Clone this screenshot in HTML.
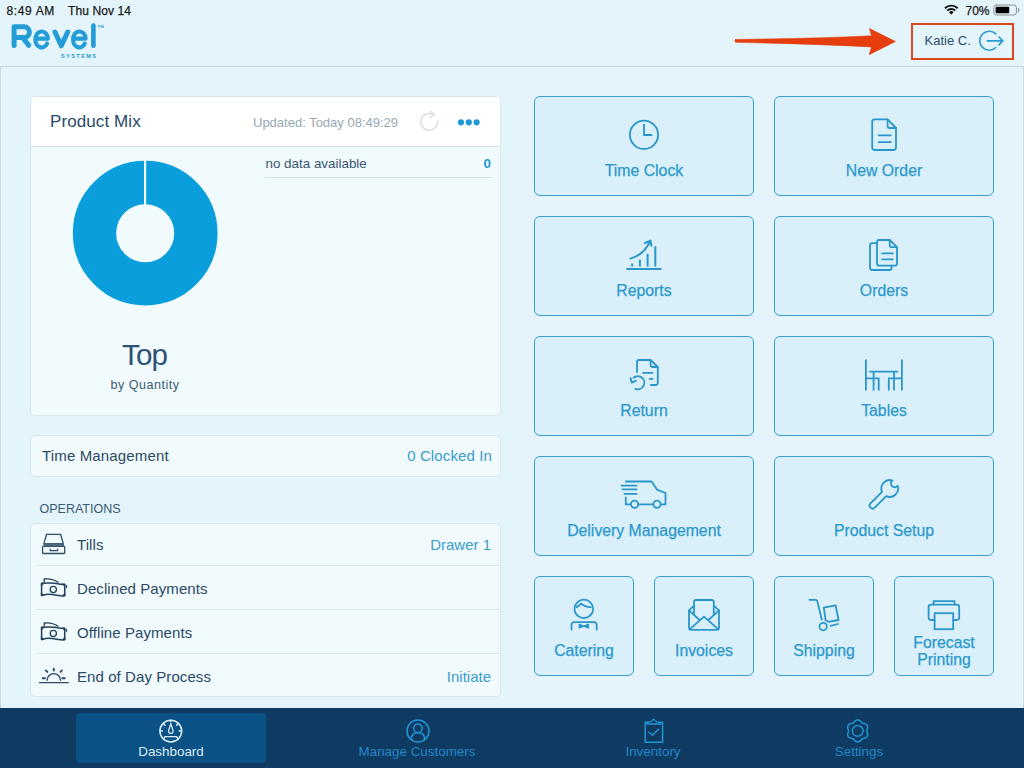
<!DOCTYPE html>
<html><head><meta charset="utf-8">
<style>
*{margin:0;padding:0;box-sizing:border-box}
html,body{width:1024px;height:768px;overflow:hidden}
body{position:relative;background:#e3f4fb;font-family:"Liberation Sans",sans-serif;color:#1f3f5c}
.a{position:absolute;white-space:nowrap}
.status{font-size:12px;color:#1a1a1a;top:3px;-webkit-text-stroke:0.25px #1a1a1a}
.card{background:#f1fafd;border:1px solid #dbe7ed;border-radius:5px}
.btn{position:absolute;background:#d9f0fb;border:1.8px solid #3a9fce;border-radius:6px}
.bl{position:absolute;left:-10px;right:-10px;text-align:center;color:#2a98cc;font-size:15.8px;-webkit-text-stroke:0.25px #2a98cc;line-height:17px;letter-spacing:0px}
.rt{position:absolute;left:77px;font-size:15px;color:#2b4964;letter-spacing:0.08px}
.rv{position:absolute;font-size:15px;color:#3a9dca;text-align:right;width:150px;left:341px;margin-top:-0.5px}
.div{position:absolute;left:36px;width:464px;height:1px;background:#dbe6ec}
.tl{position:absolute;top:744px;width:220px;text-align:center;font-size:13.4px;color:#2188c8;line-height:16px}
svg{position:absolute;left:0;top:0}
</style></head>
<body>
<!-- status bar -->
<div class="a status" style="left:6.6px;top:3.5px;letter-spacing:0.55px;word-spacing:0.3px">8:49 AM</div>
<div class="a status" style="left:68px;top:3.5px;letter-spacing:0.1px">Thu Nov 14</div>
<div class="a status" style="left:965.5px;top:3.5px">70%</div>

<!-- header line & left line -->
<div class="a" style="left:0;top:66px;width:1024px;height:1px;background:#c6d8e1"></div>
<div class="a" style="left:0;top:66px;width:1px;height:642px;background:#c6d8e1"></div>
<div class="a" style="left:1023px;top:66px;width:1px;height:642px;background:#c6d8e1"></div>

<!-- Revel logo -->
<div class="a" style="left:61px;top:52.5px;font-size:5.5px;font-weight:bold;color:#239cd8;letter-spacing:1.45px">SYSTEMS</div>
<svg width="120" height="60" viewBox="0 0 120 60" fill="none" stroke="#239cd8" stroke-linecap="round" stroke-linejoin="round" style="left:0;top:0">
  <path d="M14.1 45.4 V26.8 H24 A5.35 5.35 0 0 1 24 37.5 H14.1 M22.6 37.5 L28.8 45.4" stroke-width="5"/>
  <path d="M36.2 38.6 H47.95 A6.25 7.4 0 1 0 35.45 39.1 A6.25 7.4 0 0 0 47.1 43.6" stroke-width="4.1"/>
  <path d="M55 32 L61.3 45.8 L67.7 32" stroke-width="5"/>
  <path d="M73.9 38.6 H85.65 A6.25 7.4 0 1 0 73.15 39.1 A6.25 7.4 0 0 0 84.8 43.6" stroke-width="4.1"/>
  <path d="M93.4 25.6 V45.7" stroke-width="4.6"/>
  <text x="97.6" y="27.6" font-size="4.2" font-weight="bold" fill="#239cd8" stroke="none" font-family="Liberation Sans">TM</text>
</svg>
<!-- user -->
<div class="a" style="left:911px;top:22.6px;width:103px;height:37.4px;border:2.6px solid #dc461d"></div>
<div class="a" style="left:924.5px;top:33px;font-size:13px;color:#2a4d6c">Katie C.</div>

<!-- product mix card -->
<div class="a card" style="left:30px;top:96px;width:471px;height:320px;overflow:hidden">
  <div class="a" style="left:0;top:0;width:469px;height:50px;background:#fff;border-bottom:1px solid #d8e3e9"></div>
</div>
<div class="a" style="left:50px;top:112px;font-size:17px;color:#2a4a66;letter-spacing:0.1px">Product Mix</div>
<div class="a" style="left:253px;top:115px;font-size:13px;color:#97a8b5">Updated: Today 08:49:29</div>
<div class="a" style="left:265.5px;top:156px;font-size:13.4px;color:#3a5670">no data available</div>
<div class="a" style="left:440px;width:51px;text-align:right;top:156px;font-size:13.4px;color:#1e9ad4;font-weight:bold">0</div>
<div class="a" style="left:265px;top:177px;width:227px;height:1px;background:#d6e1e7"></div>
<div class="a" style="left:45px;width:200px;text-align:center;top:338px;font-size:29.5px;color:#2c5275;letter-spacing:-0.8px;text-indent:-0.8px">Top</div>
<div class="a" style="left:45px;width:200px;text-align:center;top:378px;font-size:12.6px;color:#3e5a73;letter-spacing:0.5px">by Quantity</div>

<!-- time mgmt -->
<div class="a card" style="left:30px;top:434.5px;width:471px;height:42.5px"></div>
<div class="a" style="left:42px;top:447px;font-size:15px;color:#2d4a63;letter-spacing:0.15px">Time Management</div>
<div class="a" style="left:300px;width:192px;text-align:right;top:447px;font-size:15px;color:#3a9dca;letter-spacing:0.12px">0 Clocked In</div>

<div class="a" style="left:39.5px;top:502px;font-size:12.5px;color:#3b5a75">OPERATIONS</div>

<div class="a card" style="left:30px;top:522.5px;width:471px;height:174px"></div>
<div class="div" style="top:565px"></div>
<div class="div" style="top:609px"></div>
<div class="div" style="top:653px"></div>
<div class="rt" style="top:536px">Tills</div>
<div class="rv" style="top:536px">Drawer 1</div>
<div class="rt" style="top:580px">Declined Payments</div>
<div class="rt" style="top:624px">Offline Payments</div>
<div class="rt" style="top:668px">End of Day Process</div>
<div class="rv" style="top:668px">Initiate</div>

<!-- buttons -->
<div class="btn" style="left:534px;top:96px;width:220px;height:100px"><div class="bl" style="top:65.1px">Time Clock</div></div>
<div class="btn" style="left:774px;top:96px;width:220px;height:100px"><div class="bl" style="top:65.1px">New Order</div></div>
<div class="btn" style="left:534px;top:216px;width:220px;height:100px"><div class="bl" style="top:65.1px">Reports</div></div>
<div class="btn" style="left:774px;top:216px;width:220px;height:100px"><div class="bl" style="top:65.1px">Orders</div></div>
<div class="btn" style="left:534px;top:336px;width:220px;height:100px"><div class="bl" style="top:65.1px">Return</div></div>
<div class="btn" style="left:774px;top:336px;width:220px;height:100px"><div class="bl" style="top:65.1px">Tables</div></div>
<div class="btn" style="left:534px;top:456px;width:220px;height:100px"><div class="bl" style="top:65.1px">Delivery Management</div></div>
<div class="btn" style="left:774px;top:456px;width:220px;height:100px"><div class="bl" style="top:65.1px">Product Setup</div></div>
<div class="btn" style="left:534px;top:576px;width:100px;height:100px"><div class="bl" style="top:65.1px">Catering</div></div>
<div class="btn" style="left:654px;top:576px;width:100px;height:100px"><div class="bl" style="top:65.1px">Invoices</div></div>
<div class="btn" style="left:774px;top:576px;width:100px;height:100px"><div class="bl" style="top:65.1px">Shipping</div></div>
<div class="btn" style="left:894px;top:576px;width:100px;height:100px"><div class="bl" style="top:56.6px">Forecast<br>Printing</div></div>

<!-- tab bar -->
<div class="a" style="left:0;top:708px;width:1024px;height:60px;background:#0f3a62"></div>
<div class="a" style="left:76px;top:713px;width:190px;height:50px;background:#0a5186;border-radius:4px"></div>
<div class="tl" style="left:61px;color:#dcecf6">Dashboard</div>
<div class="tl" style="left:307px">Manage Customers</div>
<div class="tl" style="left:543px">Inventory</div>
<div class="tl" style="left:749px">Settings</div>

<svg width="1024" height="768" viewBox="0 0 1024 768" fill="none" stroke-linecap="round" stroke-linejoin="round">
  <!-- wifi -->
  <g fill="#111" stroke="none">
    <path d="M951.30 14.60 L948.97 12.27 A3.30 3.30 0 0 1 953.63 12.27 Z"/>
    <path d="M946.63 9.93 A6.60 6.60 0 0 1 955.97 9.93 L954.62 11.28 A4.70 4.70 0 0 0 947.98 11.28 Z"/>
    <path d="M944.30 7.60 A9.90 9.90 0 0 1 958.30 7.60 L956.96 8.94 A8.00 8.00 0 0 0 945.64 8.94 Z"/>
  </g>
  <!-- battery -->
  <rect x="993.8" y="5" width="22.6" height="10" rx="2.6" stroke="#8a8f93" stroke-width="1"/>
  <rect x="995.6" y="6.8" width="13.6" height="6.4" rx="1" fill="#000" stroke="none"/>
  <path d="M1018.2 8.4 Q1019.6 10.2 1018.2 12" stroke="#8a8f93" stroke-width="1.2"/>

  <!-- red arrow -->
  <path d="M735.6 39.5 Q825 38.3 871.6 35.8 L869.4 28.4 L895.4 41.5 L869.2 54.7 L871.6 47 Q825 44.2 735.6 42.3 Q734.1 40.9 735.6 39.5 Z" fill="#e53d0d" stroke="#e53d0d" stroke-width="0.6"/>

  <!-- logout icon -->
  <path d="M995.9 33.9 A9.5 9.5 0 1 0 995.9 47.5" stroke="#2a9ad0" stroke-width="1.6"/>
  <path d="M987.4 40.9 H1002.6 M999 37 L1002.8 40.9 L999 44.8" stroke="#2a9ad0" stroke-width="1.7"/>

  <!-- refresh -->
  <path d="M433.6 114.6 A8.4 8.4 0 1 0 437.6 121" stroke="#dbe1e5" stroke-width="1.6"/>
  <path d="M430.5 111.2 L434.4 114.6 L430.2 117.6" stroke="#dbe1e5" stroke-width="1.6"/>
  <!-- dots -->
  <g fill="#1e99d6" stroke="none">
    <circle cx="461" cy="122.3" r="3.1"/><circle cx="468.8" cy="122.3" r="3.1"/><circle cx="476.6" cy="122.3" r="3.1"/>
  </g>

  <!-- donut -->
  <circle cx="145.2" cy="233.2" r="50.7" stroke="#0b9edc" stroke-width="43.3"/>
  <rect x="144" y="160" width="2.2" height="45" fill="#f1fafd" stroke="none"/>

  <!-- tills icon -->
  <g stroke="#2e4d66" stroke-width="1.3">
    <path d="M46.6 534.3 H60.6 L63.3 543.6 H43.9 Z"/>
    <rect x="42.6" y="546.4" width="22.1" height="7.1" rx="0.8"/>
    <path d="M50.2 549.2 V550.6 H57.7 V549.2"/>
  </g>
  <rect x="43.4" y="543.2" width="20.6" height="3.2" fill="#4a667c" stroke="none"/>

  <!-- money icons -->
  <g id="money" stroke="#23405a" stroke-width="1.5">
    <path d="M41.6 583.3 Q52 582.4 58 583.8 Q62 584.6 64.7 584.2 V595.8 Q60 596.2 54 594.8 Q48 593.6 41.6 595.6 Z"/>
    <circle cx="53.3" cy="589.5" r="3.1" stroke-width="1.3"/>
    <path d="M44.2 582 V579 Q52 578 58 582.2" stroke-width="1.3"/>
    <path d="M66.6 585.3 V587.8" stroke-width="1"/>
    <path d="M41.6 583.3 h2.5 l-2.5 2.5z M64.7 584.2 h-2.5 l2.5 2.5z M41.6 595.6 h2.5 l-2.5 -2.5z M64.7 595.8 h-2.5 l2.5 -2.5z" fill="#23405a" stroke-width="0.6"/>
  </g>
  <use href="#money" transform="translate(0,44)"/>

  <!-- sunrise -->
  <g stroke="#2e4d66" stroke-width="1.4">
    <path d="M39.5 682.7 H68.3" stroke-width="1.3"/>
    <path d="M47.1 680.3 A6.7 6.7 0 0 1 60.5 680.3"/>
    <path d="M53.8 668.6 V670.6 M45.8 670.4 L47.3 671.9 M61.9 670.4 L60.4 671.9 M42.7 678.3 H45 M62.4 678.3 H64.8" stroke-width="1.9"/>
  </g>

  <!-- button icons -->
  <g stroke="#2896ca" stroke-width="1.8">
    <!-- clock -->
    <circle cx="644" cy="134.8" r="14.1"/>
    <path d="M644 124.6 V135 H651.5"/>
    <!-- new order -->
    <path d="M887.6 119.3 H874.6 Q872.2 119.3 872.2 121.7 V147.6 Q872.2 150 874.6 150 H893.6 Q896 150 896 147.6 V128 Z"/>
    <path d="M887.6 119.3 V126 Q887.6 128 889.6 128 H896"/>
    <path d="M878.6 135.3 H890.8 M878.6 142.2 H890.8"/>
    <!-- reports -->
    <path d="M627.2 269 H660.6" stroke-width="2.1"/>
    <path d="M632.2 263.4 V266.6 M639.9 259.8 V266.6 M647.6 253.8 V266.6 M655.3 246.3 V266.6" stroke-width="2" stroke-linecap="butt"/>
    <path d="M630.4 258.6 Q644 255 650 241.4" stroke-width="2"/>
    <path d="M645 243 L650.4 240.6 L651.4 245.8" stroke-width="2"/>
    <!-- orders -->
    <path d="M889.7 240 H879.2 Q877 240 877 242.2 V263.4 Q877 265.6 879.2 265.6 H894.8 Q897 265.6 897 263.4 V247.2 Z"/>
    <path d="M889.7 240 V245 Q889.7 247.2 891.9 247.2 H897"/>
    <path d="M882 253.4 H892.8 M882 259.4 H892.8"/>
    <path d="M877 243.2 H872.2 Q870 243.2 870 245.4 V267.8 Q870 270 872.2 270 H889.4 Q891.6 270 891.6 267.8 V265.6"/>
    <!-- return -->
    <path d="M637 372 V362.2 Q637 360 639.2 360 H650.6 L657.8 367 V382.8 Q657.8 385 655.6 385 H651"/>
    <path d="M650.6 360 V364.8 Q650.6 367 652.8 367 H657.8"/>
    <path d="M643 372.8 H652.6 M649.6 378.8 H652.6"/>
    <path d="M633.6 377.8 A6.5 6.5 0 1 1 635.4 388.8"/>
    <path d="M630.6 378.2 L631.8 382.6 L635.8 380.8" stroke-width="2"/>
    <!-- tables -->
    <path d="M865.9 359.5 V390.6 M901.9 359.5 V390.6 M865.9 378.4 H878.7 V390.6 M901.9 378.4 H888.8 V390.6 M869.4 371.6 H898.2 M873.6 371.6 V390.6 M894 371.6 V390.6" stroke-linecap="butt" stroke-linejoin="miter"/>
    <!-- delivery -->
    <path d="M625.8 497.5 V504.3 H630.9 M638.3 504.3 H653.3 M660.7 504.3 H665.5 V493 L657 489.6 L651.6 481.5 H625.8"/>
    <circle cx="634.6" cy="504.2" r="3.6"/>
    <circle cx="657" cy="504.2" r="3.6"/>
    <path d="M621.6 485.6 H636.6 M622.6 489.4 H636.6 M624.5 493.8 H636.6"/>
    <!-- wrench -->
    <g transform="translate(889.7 488.5) rotate(45)">
      <path d="M-3 7.85 V24.1 A3 3 0 0 0 3 24.1 V7.85 A8.4 8.4 0 0 0 3.72 -7.53 A3.75 3.75 0 1 1 -3.72 -7.53 A8.4 8.4 0 0 0 -3 7.85 Z"/>
    </g>
    <!-- catering -->
    <circle cx="583.8" cy="608.9" r="9.3"/>
    <path d="M576.4 607 Q579 606.5 581 603.6 Q584.5 606.8 590.8 607.2"/>
    <path d="M571.5 629.6 V625 Q571.5 622.1 574.4 622.1 H593.8 Q596.7 622.1 596.7 625 V629.6"/>
    <path d="M579.2 624.2 L583.8 626.1 L588.4 624.2 V628 L583.8 626.1 L579.2 628 Z" fill="#2896ca" stroke-width="1.2"/>
    <!-- invoices -->
    <path d="M689 610.4 V627.6 Q689 629.8 691.2 629.8 H716.8 Q719 629.8 719 627.6 V610.4 L713.8 605.6 M689 610.4 L694 605.6"/>
    <path d="M694 614.6 V602.2 Q694 600 696.2 600 H711.6 Q713.8 600 713.8 602.2 V614.6" stroke-width="1.8"/>
    <path d="M689 610.4 L699.6 620 M719 610.4 L708.4 620 M689.6 629.4 L704 616.6 L718.4 629.4" stroke-width="1.8"/>
    <!-- shipping -->
    <path d="M809.4 599.8 H815.6 Q817.2 599.8 817.4 601.6 L821.8 619.6"/>
    <circle cx="823.2" cy="626.6" r="3.7"/>
    <path d="M830.6 625.8 L838 624"/>
    <path d="M823.8 607.6 L835.6 605.4 L838.6 620 L828.4 621.8 L825.6 620.2 Z" stroke-width="1.8"/>
    <!-- printer -->
    <path d="M933.6 604.6 V601.2 H954.6 V604.6" stroke-width="1.8"/>
    <path d="M934.6 620 H931 Q928.6 620 928.6 617.6 V607 Q928.6 604.6 931 604.6 H956.8 Q959.2 604.6 959.2 607 V617.6 Q959.2 620 956.8 620 H953.2" stroke-width="1.8"/>
    <rect x="934.6" y="613.2" width="18.6" height="16" stroke-width="1.8" stroke-linejoin="miter"/>
  </g>

  <!-- tab icons -->
  <g stroke="#dcecf6" stroke-width="1.5">
    <circle cx="170.8" cy="731.1" r="10.9"/>
    <path d="M163.4 739.2 L165 736.6 H176.6 L178.2 739.2" stroke-width="1.4"/>
    <path d="M170.8 723.6 L168.6 730.5 A2.3 2.3 0 1 0 173 730.5 Z" stroke-width="1.3"/>
    <path d="M170.8 720.3 V721.7 M163.6 723.8 L165 725.2 M178 723.8 L176.6 725.2 M160.4 731 H162.4 M179.2 731 H181.2" stroke-width="1.6"/>
  </g>
  <g stroke="#2196d6" stroke-width="1.5">
    <circle cx="418" cy="731" r="11"/>
    <circle cx="417.9" cy="728.2" r="4.3"/>
    <path d="M411.3 738.6 Q411.8 732.8 417.9 732.8 Q424 732.8 424.8 738.6"/>
    <!-- clipboard -->
    <path d="M647.6 722.3 H645.2 V742.2 H662.6 V722.3 H660.2"/>
    <path d="M646.8 724 H660.6 M647.6 723.6 L648.2 722.2 Q651.6 721.6 652.6 720 Q653.5 719 654.4 720 Q655.4 721.6 658.8 722.2 L659.6 723.6" stroke-width="1.4"/>
    <path d="M649 732.3 L652.4 735.2 L658.6 729.2"/>
    <!-- gear -->
    <path transform="translate(857.7 730.9)" d="M9.10 0.00 L9.15 0.48 L9.30 0.98 L9.51 1.51 L9.73 2.07 L9.91 2.66 L10.02 3.26 L10.02 3.85 L9.91 4.41 L9.71 4.95 L9.44 5.45 L9.14 5.93 L8.78 6.38 L8.34 6.75 L7.83 7.05 L7.26 7.26 L6.66 7.39 L6.06 7.48 L5.50 7.57 L4.99 7.69 L4.55 7.88 L4.16 8.17 L3.80 8.54 L3.45 8.99 L3.07 9.46 L2.66 9.91 L2.19 10.30 L1.68 10.60 L1.13 10.79 L0.57 10.88 L0.00 10.90 L-0.57 10.88 L-1.13 10.79 L-1.68 10.60 L-2.19 10.30 L-2.66 9.91 L-3.07 9.46 L-3.45 8.99 L-3.80 8.54 L-4.16 8.17 L-4.55 7.88 L-4.99 7.69 L-5.50 7.57 L-6.06 7.48 L-6.66 7.39 L-7.26 7.26 L-7.83 7.05 L-8.34 6.75 L-8.78 6.38 L-9.14 5.93 L-9.44 5.45 L-9.71 4.95 L-9.91 4.41 L-10.02 3.85 L-10.02 3.26 L-9.91 2.66 L-9.73 2.07 L-9.51 1.51 L-9.30 0.98 L-9.15 0.48 L-9.10 0.00 L-9.15 -0.48 L-9.30 -0.98 L-9.51 -1.51 L-9.73 -2.07 L-9.91 -2.66 L-10.02 -3.26 L-10.02 -3.85 L-9.91 -4.41 L-9.71 -4.95 L-9.44 -5.45 L-9.14 -5.93 L-8.78 -6.38 L-8.34 -6.75 L-7.83 -7.05 L-7.26 -7.26 L-6.66 -7.39 L-6.06 -7.48 L-5.50 -7.57 L-4.99 -7.69 L-4.55 -7.88 L-4.16 -8.17 L-3.80 -8.54 L-3.45 -8.99 L-3.07 -9.46 L-2.66 -9.91 L-2.19 -10.30 L-1.68 -10.60 L-1.13 -10.79 L-0.57 -10.88 L-0.00 -10.90 L0.57 -10.88 L1.13 -10.79 L1.68 -10.60 L2.19 -10.30 L2.66 -9.91 L3.07 -9.46 L3.45 -8.99 L3.80 -8.54 L4.16 -8.17 L4.55 -7.88 L4.99 -7.69 L5.50 -7.57 L6.06 -7.48 L6.66 -7.39 L7.26 -7.26 L7.83 -7.05 L8.34 -6.75 L8.78 -6.38 L9.14 -5.93 L9.44 -5.45 L9.71 -4.95 L9.91 -4.41 L10.02 -3.85 L10.02 -3.26 L9.91 -2.66 L9.73 -2.07 L9.51 -1.51 L9.30 -0.98 L9.15 -0.48Z"/>
    <circle cx="857.7" cy="730.9" r="5.4"/>
  </g>
</svg>
</body></html>
